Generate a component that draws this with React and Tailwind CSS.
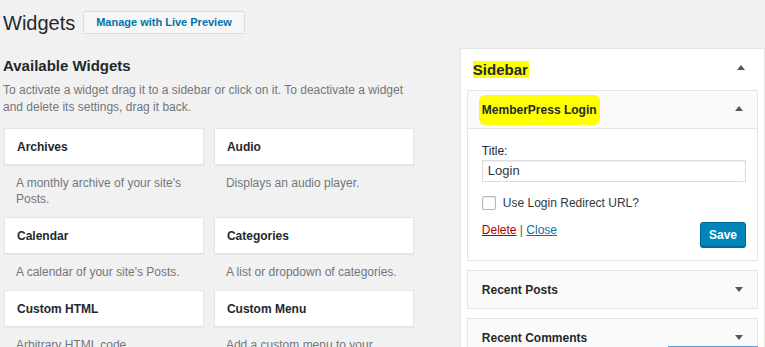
import React from "react";

const widgets = [
  { title: "Archives", desc: "A monthly archive of your site's Posts." },
  { title: "Audio", desc: "Displays an audio player." },
  { title: "Calendar", desc: "A calendar of your site's Posts." },
  { title: "Categories", desc: "A list or dropdown of categories." },
  { title: "Custom HTML", desc: "Arbitrary HTML code." },
  { title: "Custom Menu", desc: "Add a custom menu to your sidebar." },
];

const Arrow = ({ up }) => (
  <svg width="8" height="5" viewBox="0 0 8 5" className="shrink-0">
    {up ? (
      <polygon points="0,5 4,0 8,5" fill="#50575e" />
    ) : (
      <polygon points="0,0 8,0 4,5" fill="#50575e" />
    )}
  </svg>
);

const WidgetCell = ({ title, desc }) => (
  <div className="flex flex-col">
    <div className="h-[37px] flex items-center px-[12px] bg-white border border-[#e5e5e5] shadow-[0_1px_1px_rgba(0,0,0,0.04)]">
      <span className="text-[12px] font-bold text-[#23282d]">{title}</span>
    </div>
    <p className="pl-[12px] pr-[2px] pt-[10px] pb-[10px] text-[12px] leading-[16px] text-[#72777c]">
      {desc}
    </p>
  </div>
);

const ClosedBox = ({ title }) => (
  <div className="mx-[6px] mb-[9px] h-[39px] flex items-center justify-between pl-[14px] pr-[14px] bg-[#fafafa] border border-[#e5e5e5]">
    <span className="text-[12px] font-bold text-[#23282d]">{title}</span>
    <Arrow />
  </div>
);

const App = () => {
  return (
    <div
      className="w-[765px] h-[347px] overflow-hidden bg-[#f1f1f1] text-[#23282d]"
      style={{ fontFamily: '"Liberation Sans", Arial, sans-serif' }}
    >
      <div className="flex items-center pt-[11px] pl-[3px]">
        <h1 className="text-[20px] leading-[22px] text-[#23282d] w-[80px]">Widgets</h1>
        <button className="h-[23px] px-[8px] bg-[#f7f7f7] border border-[#dcdcdc] rounded-[2px] text-[11px] font-bold text-[#0073aa] w-[162px]">
          Manage with Live Preview
        </button>
      </div>

      <div className="flex mt-[14px]">
        <div className="w-[412px] ml-[3px] pt-[9px]">
          <h2 className="text-[15px] font-bold leading-[18px] text-[#23282d]">Available Widgets</h2>
          <p className="mt-[7px] text-[12px] leading-[17px] text-[#72777c]">
            To activate a widget drag it to a sidebar or click on it. To deactivate a widget
            <br />
            and delete its settings, drag it back.
          </p>
          <div className="grid grid-cols-2 gap-x-[10px] mt-[12px] ml-[1px]">
            {widgets.map((w) => (
              <WidgetCell key={w.title} title={w.title} desc={w.desc} />
            ))}
          </div>
        </div>

        <div className="ml-[46px] w-[306px] bg-white border border-[#e5e5e5] h-[320px]">
          <div className="h-[41px] flex items-center justify-between pl-[12px] pr-[19px]">
            <span className="bg-[#ffff00] text-[15px] font-bold leading-[17px] text-[#23282d] pr-[1px]">
              Sidebar
            </span>
            <div className="mt-[-4px]">
              <Arrow up />
            </div>
          </div>

          <div className="mx-[6px] mb-[9px] border border-[#e5e5e5]">
            <div className="h-[38px] flex items-center justify-between pl-[11px] pr-[14px] bg-[#fafafa] border-b border-[#e5e5e5]">
              <span className="bg-[#ffff00] rounded-[6px] px-[3px] py-[6px] text-[12px] font-bold text-[#23282d]">
                MemberPress Login
              </span>
              <div className="mt-[-2px]">
                <Arrow up />
              </div>
            </div>
            <div className="bg-white pl-[14px] pr-[11px] pt-[15px] pb-[13px]">
              <div className="text-[12px] leading-[14px] text-[#23282d]">Title:</div>
              <div className="mt-[2px] h-[22px] border border-[#dddddd] shadow-[inset_0_1px_2px_rgba(0,0,0,0.07)] flex items-center px-[5px] text-[13px] text-[#32373c]">
                Login
              </div>
              <div className="mt-[14px] h-[14px] flex items-center gap-[7px]">
                <div className="w-[14px] h-[14px] border border-[#b4b9be] rounded-[2px] bg-white shadow-[inset_0_1px_2px_rgba(0,0,0,0.1)]" />
                <span className="text-[12px] text-[#32373c]">Use Login Redirect URL?</span>
              </div>
              <div className="mt-[12px] flex items-start justify-between">
                <div className="text-[12px] leading-[14px] text-[#555] mt-[1px]">
                  <span className="text-[#a00] underline">Delete</span>
                  <span> | </span>
                  <span className="text-[#0073aa] underline">Close</span>
                </div>
                <button className="w-[46px] h-[25px] bg-[#0085ba] border border-[#006799] rounded-[3px] text-white text-[12px] font-bold shadow-[0_1px_0_#006799]">
                  Save
                </button>
              </div>
            </div>
          </div>

          <ClosedBox title="Recent Posts" />
          <div className="relative">
            <ClosedBox title="Recent Comments" />
            <div className="absolute left-[207px] right-[6px] top-[28px] h-[2px] bg-[#5b9dd9]" />
          </div>
        </div>
      </div>
    </div>
  );
};

export default App;
